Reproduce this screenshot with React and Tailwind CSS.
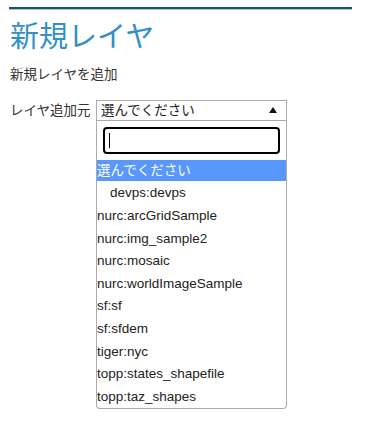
import React from 'react';

const options = [
  'nurc:arcGridSample',
  'nurc:img_sample2',
  'nurc:mosaic',
  'nurc:worldImageSample',
  'sf:sf',
  'sf:sfdem',
  'tiger:nyc',
  'topp:states_shapefile',
  'topp:taz_shapes',
];

const font = { fontFamily: '"Liberation Sans", "Noto Sans CJK JP", sans-serif' };

export default function App() {
  return (
    <div className="min-h-screen bg-white text-[#333]" style={font}>
      {/* header rule */}
      <div className="ml-[9px] w-[343px] pt-[7px]">
        <div className="h-[2px] bg-[#0f5577]" />
        <div className="h-[1px] bg-[#a9c6d6]" />
      </div>

      <div className="px-[10px]">
        <h1 className="mt-[10px] text-[29px] leading-[34px] font-normal text-[#3390c6]">新規レイヤ</h1>
        <p className="mt-[11px] text-[13.5px] leading-[20px]">新規レイヤを追加</p>

        <div className="mt-[15px] flex items-start">
          <label className="w-[86px] pt-[1px] text-[13.5px] leading-[20px]">レイヤ追加元</label>

          <div className="w-[191px]">
            {/* select box */}
            <div className="flex h-[21px] items-center justify-between border border-[#aaa] bg-white pl-[4px] pr-[9px] text-[13.5px]">
              <span className="leading-[19px] text-[#222]">選んでください</span>
              <svg width="8" height="6" viewBox="0 0 8 6" className="mb-[1px]">
                <path d="M0 6 L4 0 L8 6 Z" fill="#111" />
              </svg>
            </div>

            {/* dropdown */}
            <div className="rounded-b-[4px] border border-t-0 border-[#aaa] bg-white">
              <div className="px-[6px] pt-[6px] pb-[6px]">
                <div className="flex h-[27px] items-center rounded-[4px] border-2 border-black pl-[4px]">
                  <span className="h-[15px] w-[1px] bg-black" />
                </div>
              </div>
              <div className="h-[21px] bg-[#5897fb] text-[13.5px] leading-[21px] text-white">選んでください</div>
              <div className="h-[24px] pl-[13px] text-[13.5px] leading-[24px] text-[#222]">devps:devps</div>
              {options.map((o) => (
                <div key={o} className="h-[22.6px] text-[13.5px] leading-[22.6px] text-[#222]">
                  {o}
                </div>
              ))}
            </div>
          </div>
        </div>
      </div>
    </div>
  );
}
